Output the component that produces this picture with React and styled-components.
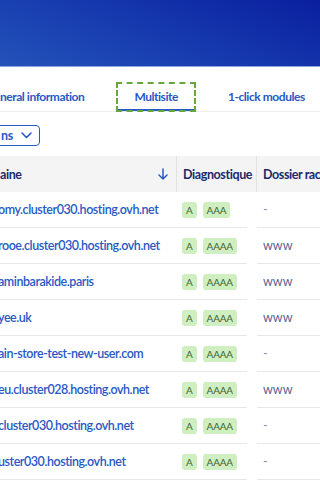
import React from 'react';
import styled, { createGlobalStyle } from 'styled-components';

const GlobalStyle = createGlobalStyle`
  body {
    margin: 0;
    background: #fff;
    font-family: Lato, "Open Sans", "Liberation Sans", sans-serif;
    overflow: hidden;
  }
`;

const Page = styled.div`
  width: 320px;
  height: 480px;
  overflow: hidden;
  background: #fff;
`;

const Banner = styled.div`
  height: 66px;
  background: linear-gradient(200deg, #0a1f9e 0%, #1537ad 45%, #2353b9 100%);
  border-bottom: 1px solid #8ea6e2;
`;

const TabBar = styled.div`
  display: flex;
  gap: 16px;
  padding-top: 16px;
  margin-left: -17px;
  border-bottom: 1px solid #ededed;
`;

const Tab = styled.div`
  height: 28px;
  padding: 0 17px;
  display: flex;
  align-items: center;
  box-sizing: border-box;
  font-size: 12px;
  font-weight: 700;
  letter-spacing: -0.45px;
  color: #2859c5;
  white-space: nowrap;
  border-bottom: 2px solid ${({ $active }) => ($active ? '#2859c5' : 'transparent')};
  outline: ${({ $active }) => ($active ? '2px dashed #64a83a' : 'none')};
  outline-offset: -1px;
`;

const Toolbar = styled.div`
  display: flex;
  padding-top: 13px;
`;

const ActionButton = styled.button`
  height: 21px;
  margin-left: -12px;
  padding: 0 7px 0 12px;
  display: flex;
  align-items: center;
  gap: 8px;
  border: 1px solid #2859c5;
  border-radius: 4px;
  background: #fff;
  font-family: inherit;
  font-size: 12.5px;
  font-weight: 700;
  letter-spacing: -0.4px;
  color: #2859c5;
`;

const Table = styled.div`
  margin-top: 10px;
`;

const Row = styled.div`
  display: grid;
  grid-template-columns: 176px 80px 1fr;
  height: 36px;
  background: ${({ $head }) => ($head ? '#f4f4f4' : '#fff')};
`;

const HeadCell = styled.div`
  display: flex;
  align-items: center;
  justify-content: space-between;
  padding: 0 8px 0 7px;
  font-size: 12.5px;
  font-weight: 700;
  letter-spacing: -0.4px;
  color: #1b2a6c;
  white-space: nowrap;
  overflow: hidden;
  border-left: ${({ $first }) => ($first ? 'none' : '1px solid #e2e2e2')};
  padding-left: ${({ $first }) => ($first ? '0' : '6px')};
`;

const Cell = styled.div`
  display: flex;
  align-items: center;
  gap: 6px;
  border-bottom: 1px solid #e9e9e9;
  white-space: nowrap;
  overflow: hidden;
`;

const DomainCell = styled(Cell)`
  margin-left: -2px;
  font-size: 12.5px;
  font-weight: 600;
  letter-spacing: -0.45px;
  color: #2859c5;
`;

const DiagCell = styled(Cell)`
  padding-left: 6px;
  margin-right: 9px;
`;

const FolderCell = styled(Cell)`
  padding-left: 6px;
  margin-left: 1px;
  font-size: 12.5px;
  color: ${({ $empty }) => ($empty ? '#8a8fb0' : '#5a5f94')};
`;

const Badge = styled.span`
  height: 16px;
  padding: 0 4px;
  display: inline-flex;
  align-items: center;
  border-radius: 3px;
  background: #cfefc0;
  color: #3d6330;
  font-size: 10px;
  letter-spacing: -0.2px;
`;

const Chevron = () => (
  <svg width="11" height="7" viewBox="0 0 11 7" fill="none">
    <path d="M1 1l4.5 4.5L10 1" stroke="#2859c5" strokeWidth="1.6" strokeLinecap="round" strokeLinejoin="round" />
  </svg>
);

const ArrowDown = () => (
  <svg width="10" height="12" viewBox="0 0 10 12" fill="none">
    <path d="M5 1v10M1 7l4 4 4-4" stroke="#2859c5" strokeWidth="1.5" strokeLinecap="round" strokeLinejoin="round" />
  </svg>
);

const rows = [
  { domain: 'omy.cluster030.hosting.ovh.net', zone: 'AAA', folder: '-' },
  { domain: 'rooe.cluster030.hosting.ovh.net', zone: 'AAAA', folder: 'www' },
  { domain: 'aminbarakide.paris', zone: 'AAAA', folder: 'www' },
  { domain: 'yee.uk', zone: 'AAAA', folder: 'www' },
  { domain: 'ain-store-test-new-user.com', zone: 'AAAA', folder: '-' },
  { domain: 'eu.cluster028.hosting.ovh.net', zone: 'AAAA', folder: 'www' },
  { domain: 'cluster030.hosting.ovh.net', zone: 'AAAA', folder: '-' },
  { domain: 'uster030.hosting.ovh.net', zone: 'AAAA', folder: '-' },
];

const App = () => (
  <Page>
    <GlobalStyle />
    <Banner />
    <TabBar>
      <Tab>neral information</Tab>
      <Tab $active>Multisite</Tab>
      <Tab>1-click modules</Tab>
    </TabBar>
    <Toolbar>
      <ActionButton>
        ns <Chevron />
      </ActionButton>
    </Toolbar>
    <Table>
      <Row $head>
        <HeadCell $first>
          aine <ArrowDown />
        </HeadCell>
        <HeadCell>Diagnostique</HeadCell>
        <HeadCell>Dossier racine</HeadCell>
      </Row>
      {rows.map((r) => (
        <Row key={r.domain}>
          <DomainCell>{r.domain}</DomainCell>
          <DiagCell>
            <Badge>A</Badge>
            <Badge>{r.zone}</Badge>
          </DiagCell>
          <FolderCell $empty={r.folder === '-'}>{r.folder}</FolderCell>
        </Row>
      ))}
    </Table>
  </Page>
);

export default App;
